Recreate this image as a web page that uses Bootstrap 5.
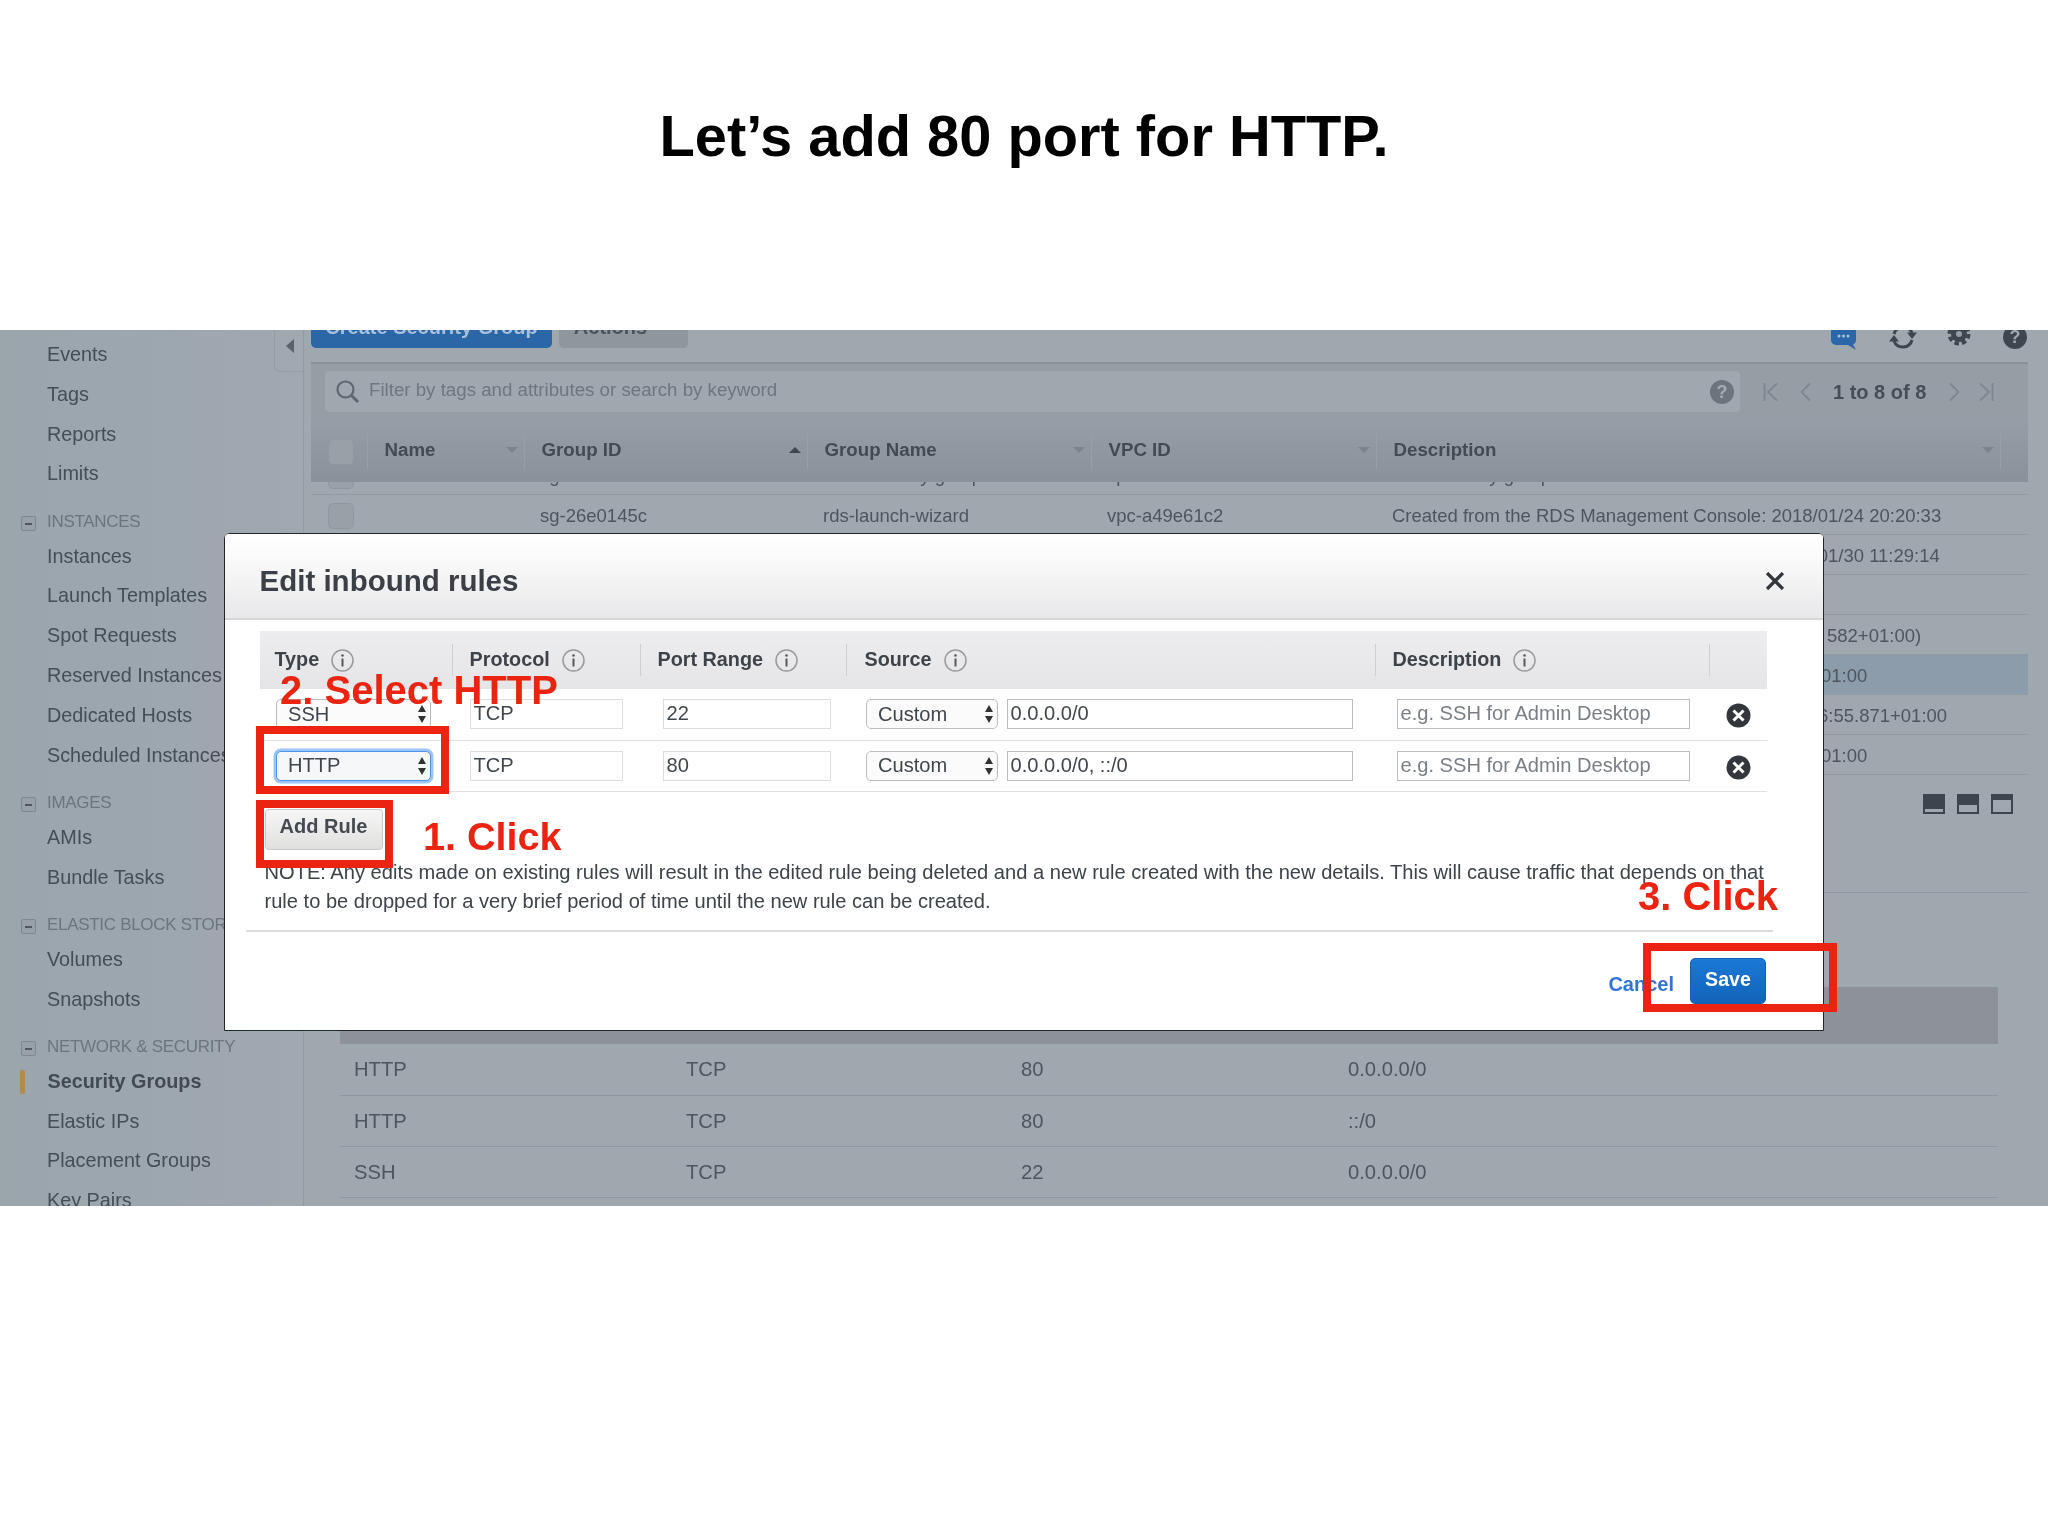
<!doctype html>
<html lang="en">
<head>
<meta charset="utf-8">
<title>Let's add 80 port for HTTP</title>
<link href="https://cdn.jsdelivr.net/npm/bootstrap@5.3.0/dist/css/bootstrap.min.css" rel="stylesheet">
<style>
html,body{background:#fff;margin:0;font-family:"Liberation Sans",Arial,sans-serif}
.slide-head{height:330px;padding-top:98px;margin:0;font-size:57.8px;font-weight:700;line-height:76px;color:#000;text-align:center;letter-spacing:0}
.console{height:876px;overflow:hidden;background:#9fa7af;color:#454d57;font-size:19.8px;filter:blur(.6px)}
.side-nav{width:304px;flex:none;padding-top:5px;border-right:1px solid #929aa2;background:linear-gradient(90deg,#9aa5ac,#a0a8b0)}
.nav-item-x{height:39.8px;line-height:39.8px;padding-left:47px;white-space:nowrap}
.nav-group{height:42.4px;padding-top:14px;display:flex;align-items:flex-start;padding-left:21px;gap:11px;font-size:17px;letter-spacing:-.3px;color:#6c757f;line-height:28px;white-space:nowrap}
.minus-box{width:15px;height:15px;margin-top:8px;border:1px solid #7f8891;border-radius:2px;background:#98a0a8;flex:none;display:flex;align-items:center;justify-content:center}
.minus-box i{display:block;width:7px;height:2px;background:#505862}
.nav-active{font-weight:700;padding-left:47.5px;position:relative;color:#434a54}
.nav-active::before{content:"";position:absolute;left:20px;top:8px;width:5px;height:24px;background:#b5894d;border-radius:2px}
.collapse-tab{left:274px;top:0;width:31px;height:42px;border:1px solid #949ca4;border-top:0;border-right:0;border-bottom-left-radius:6px}
.collapse-tab i{position:absolute;left:11px;top:9px;border-style:solid;border-width:7px 8px 7px 0;border-color:transparent #59616b transparent transparent}
.work{padding:0 20px 0 7px;min-width:0}
.top-strip{height:32px;align-items:flex-end;padding-bottom:14.5px;gap:7px;position:relative}
.create-btn,.act-btn{height:42px;flex:none;border:0;border-radius:0 0 5px 5px;font-size:20px;font-weight:700;line-height:42px;padding:0}
.create-btn{width:241px;background:#2b66a6;color:#a5bfdc}
.act-btn{width:129px;background:#8f969e;color:#4b525c;padding-right:26px}
.tool-ico{position:absolute}
.ico-chat{left:1519px;bottom:10px}.ico-sync{left:1577px;bottom:11px}.ico-gear{left:1636px;bottom:16px}.ico-help{left:1692px;bottom:13px}
.help-dot{width:24px;height:24px;border-radius:50%;background:#3f4650;color:#a0a8b0;font-size:18px;font-weight:700;line-height:24px;text-align:center;display:block}
.search-strip{height:59px;border-top:2px solid #8b929a;background:#959da5;padding:6px 0 8px 14px;align-items:center}
.search-box{width:1415px;height:41px;background:#9fa7af;border-radius:4px;padding:0 6px 0 10px;align-items:center;gap:9px;font-size:18.7px;color:#6e7680}
.search-txt{padding-bottom:2px}
.search-help{width:24px;height:24px;border-radius:50%;background:#6d747e;color:#a5acb4;font-weight:700;font-size:18px;line-height:24px;text-align:center;margin-left:auto}
.pager{padding-left:23px;align-items:center;font-weight:700;font-size:20px;color:#454d57;white-space:nowrap}
.pg-txt{margin:0 23px 0 22px}
.pg-a{margin-right:21px}.pg-b{margin-left:18px}
.grid-cols{display:grid;grid-template-columns:57px 157px 283px 284px 285px 624px 1fr}
.grid-head{height:61px;background:linear-gradient(#969da6,#8b919a);font-weight:700;font-size:18.7px;color:#434a54;position:relative;z-index:1}
.grid-head>div{display:flex;align-items:center;padding:0 4px 3px 16.5px;justify-content:space-between;position:relative}
.grid-head>div::after{content:"";position:absolute;right:0;top:13px;bottom:13px;width:1px;background:#989fa8}
.grid-head>div:last-child::after{display:none}
.caret-d,.caret-u{width:0;height:0;border-left:6px solid transparent;border-right:6px solid transparent;margin-right:3px}
.caret-d{border-top:6px solid #7c838d}
.caret-u{border-bottom:6px solid #3f4650}
.fake-check{width:26px;height:26px;border:1px solid #8f97a0;border-radius:5px;background:#98a0a8;margin-left:17px}
.grid-rows{overflow:hidden}
.grid-line{height:40px;align-items:center;border-bottom:1px solid #929aa2;font-size:18.5px;color:#4d555f;white-space:nowrap;padding-top:2px}
.grid-line>div{padding-left:15px;min-width:0}
.grid-line>div:first-child{padding-left:0}
.line-clip{margin-top:-27px}
.line-sel{background:#8c9cab}
.pad-a{padding-left:444px!important}
.pad-b{padding-left:450px!important}.pad-c{padding-left:441px!important}
.layout-zone{height:118px;border-bottom:1px solid #8f97a0;padding:19px 15px 0 0;justify-content:flex-end;gap:12px}
.pane-ico{width:22px;height:20px;background:#3d444e;display:flex;flex-direction:column;justify-content:flex-end}
.pane-ico i{display:block;background:#9fa7af;margin:0 2px 2px}
.pi-1 i{height:3px}.pi-2 i{height:7px}.pi-3 i{height:12px}
.pane-wrap{padding:94px 30px 0 29px}
.table.perm-table{--bs-table-bg:transparent;--bs-table-color:#4d555f;--bs-table-border-color:#8f97a0;table-layout:fixed;margin:0;font-size:20.2px;color:#4d555f}
.perm-table th{height:57px;background:#8c9298;font-weight:700;border:0;padding:0 0 0 14px;vertical-align:middle}
.perm-table td{height:51.3px;padding:0 0 0 14px;vertical-align:middle;border-color:#8f97a0}
.col-a{width:332px}.col-b{width:335px}.col-c{width:327px}
.rule-dialog{left:224px;top:203px;width:1600px;height:497.500px;background:#fff;border:1.500px solid #22252a;border-radius:6px 6px 0 0;color:#333a42;font-size:20.1px}
.modal-header.rule-head{height:86px;flex:none;padding:10px 38px 0 34.500px;background:linear-gradient(#fff,#fbfbfb 25%,#e8e8ea);border-bottom:2px solid #d5d5d8;border-radius:4px 4px 0 0}
.rule-title{font-size:29.5px;font-weight:700;color:#3b3f46;margin:0;line-height:1}
.modal-header .btn-close.x-close{font-size:20px;padding:0;margin:0;width:20px;height:20px;opacity:1;background:url("data:image/svg+xml,%3Csvg xmlns='http://www.w3.org/2000/svg' viewBox='0 0 20 20'%3E%3Cpath d='M2 2l16 16M18 2L2 18' stroke='%2333373c' stroke-width='3.200' fill='none'/%3E%3C/svg%3E") center/20px no-repeat}
.rule-body{padding:11px 56px 0 34.500px;flex:none}
.rule-cols{display:grid;grid-template-columns:193px 188px 206px 529px 334px 56px}
.rule-headrow{height:58px;background:linear-gradient(#ededef,#e5e5e8);font-weight:700;font-size:19.8px;color:#3e434a}
.rule-headrow>div{display:flex;align-items:center;gap:12px;padding-left:17px;position:relative}
.rule-headrow>div:first-child{padding-left:15px}
.rule-headrow>div:nth-child(4){padding-left:18px}
.rule-headrow>div:not(:last-child)::after{content:"";position:absolute;right:0;top:13px;bottom:13px;width:1px;background:#cfcfd2}
.rule-row{height:51.7px;align-items:center;border-bottom:1px solid #e1e1e3;padding-bottom:1px}
.rule-row>div{display:flex;align-items:center;min-width:0}
.rm-ico{margin:3px 0 0 1px}
select.form-select.pick,input.form-control.field{height:30px;min-height:0;font-size:20.1px;line-height:1;color:#40464e}
select.form-select.pick{padding:0 0 0 11.5px;border:1px solid #bcbcbf;border-radius:5px;background-color:#fbfbfb;background-image:url("data:image/svg+xml,%3Csvg xmlns='http://www.w3.org/2000/svg' width='10' height='20'%3E%3Cpath d='M5 1 9 8H1zM5 19 1 12h8z' fill='%23333'/%3E%3C/svg%3E");background-size:10px 20px;background-position:right 3px center;background-repeat:no-repeat;box-shadow:none}
input.form-control.field{padding:0 3px;border:1px solid #dcdcde;border-radius:0;box-shadow:none;background:#fff}
input.field::placeholder{color:#7a7f86;opacity:1}
.wide-src{border-color:#bdbdc0!important}
.w-type{margin-left:16px;width:155px!important}
.w-proto{margin-left:17px;width:153px!important}
.w-port{margin-left:22px;width:168px!important}
.w-cust{margin-left:19px;width:132px!important}
.w-src{margin-left:9px;width:346px!important}
.w-desc{margin-left:21px;width:293px!important}
select.form-select.pick.picked{border-color:#4d94ea;box-shadow:0 0 0 2.500px #9cc6f5;background-color:#f6f7f9}
.add-btn{display:block;margin:17px 0 7.6px 5px;width:118px;height:41px;padding:0 0 7px;font-size:20px;font-weight:700;color:#454a51;background:linear-gradient(#f6f6f6,#e0e0df);border:1px solid #c8c8c8;border-radius:4px}
.note-text{margin:0 0 0 5px;line-height:29.5px;font-size:20.1px;white-space:nowrap;color:#3d434b}
.rule-rule{margin:13px 50px 0 21px;height:2px;border:0;background:#dcdcde;opacity:1;flex:none}
.rule-foot{padding:26px 57px 0 0;justify-content:flex-end;align-items:flex-start;gap:16px;flex:none}
.cancel-lnk{color:#2f76d6;font-weight:700;font-size:20px;text-decoration:none;margin-top:15px;line-height:22px}
.btn.save-btn{width:76px;height:46px;padding:0 0 3px;border:1px solid #1262b5;background:linear-gradient(#1b78d6,#1264b9);color:#fff;font-weight:700;font-size:19.6px;border-radius:5px}
.red-frame{border:8px solid #ea2410;pointer-events:none}
.rf-1{left:256px;top:396px;width:193px;height:68px}
.rf-2{left:256px;top:470px;width:137px;height:68px}
.rf-3{left:1643px;top:613px;width:194px;height:69px}
.red-note{color:#ea2410;font-size:40px;font-weight:700;line-height:46px;white-space:nowrap}
.rn-1{left:423px;top:483px;font-size:39.6px}
.rn-2{left:280px;top:337px}
.rn-3{left:1638px;top:543px}
</style>
</head>
<body>
<h1 class="slide-head">Let’s add 80 port for HTTP.</h1>

<div class="console d-flex position-relative">
  <aside class="side-nav position-relative">
    <div class="collapse-tab position-absolute"><i></i></div>
    <div class="nav-item-x">Events</div>
    <div class="nav-item-x">Tags</div>
    <div class="nav-item-x">Reports</div>
    <div class="nav-item-x">Limits</div>
    <div class="nav-group"><span class="minus-box"><i></i></span>INSTANCES</div>
    <div class="nav-item-x">Instances</div>
    <div class="nav-item-x">Launch Templates</div>
    <div class="nav-item-x">Spot Requests</div>
    <div class="nav-item-x">Reserved Instances</div>
    <div class="nav-item-x">Dedicated Hosts</div>
    <div class="nav-item-x">Scheduled Instances</div>
    <div class="nav-group"><span class="minus-box"><i></i></span>IMAGES</div>
    <div class="nav-item-x">AMIs</div>
    <div class="nav-item-x">Bundle Tasks</div>
    <div class="nav-group"><span class="minus-box"><i></i></span>ELASTIC BLOCK STORE</div>
    <div class="nav-item-x">Volumes</div>
    <div class="nav-item-x">Snapshots</div>
    <div class="nav-group"><span class="minus-box"><i></i></span>NETWORK &amp; SECURITY</div>
    <div class="nav-item-x nav-active">Security Groups</div>
    <div class="nav-item-x">Elastic IPs</div>
    <div class="nav-item-x">Placement Groups</div>
    <div class="nav-item-x">Key Pairs</div>
  </aside>

  <main class="work flex-grow-1">
    <div class="top-strip d-flex">
      <button class="create-btn">Create Security Group</button>
      <button class="act-btn">Actions</button>
      <svg class="tool-ico ico-chat" width="27" height="27" viewBox="0 0 27 27"><path d="M6 1h15a5 5 0 0 1 5 5v9a5 5 0 0 1-3 4.500L26 25l-8-5H6a5 5 0 0 1-5-5V6a5 5 0 0 1 5-5z" fill="#2b66a8"/><circle cx="9" cy="11" r="1.500" fill="#a8c4e2"/><circle cx="13.500" cy="11" r="1.500" fill="#a8c4e2"/><circle cx="18" cy="11" r="1.500" fill="#a8c4e2"/></svg>
      <svg class="tool-ico ico-sync" width="30" height="28" viewBox="0 0 30 28" fill="none"><path d="M6 11a9.500 9.500 0 0 1 18-1" stroke="#3f4650" stroke-width="3"/><path d="M24 17a9.500 9.500 0 0 1-18 1" stroke="#3f4650" stroke-width="3"/><path d="M19 9.500h10l-5 6.500zM1 18.500h10l-5-6.500z" fill="#3f4650"/></svg>
      <svg class="tool-ico ico-gear" width="24" height="24" viewBox="0 0 24 24"><circle cx="12" cy="12" r="8" fill="#3f4650"/><circle cx="12" cy="12" r="9.500" fill="none" stroke="#3f4650" stroke-width="4" stroke-dasharray="4.500 2.960"/><circle cx="12" cy="12" r="3" fill="#949ca4"/></svg>
      <span class="tool-ico ico-help help-dot">?</span>
    </div>

    <div class="search-strip d-flex">
      <div class="search-box d-flex">
        <svg width="25" height="25" viewBox="0 0 25 25" fill="none" stroke="#5f6771" stroke-width="2.200"><circle cx="10.500" cy="10.500" r="8"/><path d="M16 16l7 7" stroke-width="3"/></svg>
        <span class="search-txt">Filter by tags and attributes or search by keyword</span>
        <span class="search-help">?</span>
      </div>
      <div class="pager d-flex">
        <svg width="16" height="20" viewBox="0 0 16 20" fill="none" stroke="#7e8690" stroke-width="1.800" class="pg-a"><path d="M1.500 1v18M14 1.500 5 10l9 8.500"/></svg>
        <svg width="11" height="20" viewBox="0 0 11 20" fill="none" stroke="#7e8690" stroke-width="1.800"><path d="M10 1.500 1.500 10l8.500 8.500"/></svg>
        <span class="pg-txt">1 to 8 of 8</span>
        <svg width="11" height="20" viewBox="0 0 11 20" fill="none" stroke="#7e8690" stroke-width="1.800"><path d="M1 1.500 9.500 10 1 18.500"/></svg>
        <svg width="16" height="20" viewBox="0 0 16 20" fill="none" stroke="#7e8690" stroke-width="1.800" class="pg-b"><path d="M14.500 1v18M2 1.500 11 10l-9 8.500"/></svg>
      </div>
    </div>

    <div class="grid-cols grid-head">
      <div class="p-0"><span class="fake-check"></span></div>
      <div>Name<span class="caret-d"></span></div>
      <div>Group ID<span class="caret-u"></span></div>
      <div>Group Name<span class="caret-d"></span></div>
      <div>VPC ID<span class="caret-d"></span></div>
      <div>Description<span class="caret-d"></span></div>
      <div></div>
    </div>
    <div class="grid-rows">
      <div class="grid-cols grid-line line-clip"><div><span class="fake-check d-block"></span></div><div></div><div>sg-0a1f2b3c</div><div>Web security group</div><div>vpc-a49e61c2</div><div>Web security group</div></div>
      <div class="grid-cols grid-line"><div><span class="fake-check d-block"></span></div><div></div><div>sg-26e0145c</div><div>rds-launch-wizard</div><div>vpc-a49e61c2</div><div>Created from the RDS Management Console: 2018/01/24 20:20:33</div></div>
      <div class="grid-cols grid-line"><div></div><div></div><div></div><div></div><div></div><div>Created from the RDS Management Console: 2018/01/30 11:29:14</div></div>
      <div class="grid-cols grid-line"><div></div><div></div><div></div><div></div><div></div><div></div></div>
      <div class="grid-cols grid-line"><div></div><div></div><div></div><div></div><div></div><div class="pad-b">582+01:00)</div></div>
      <div class="grid-cols grid-line line-sel"><div></div><div></div><div></div><div></div><div></div><div class="pad-a">01:00</div></div>
      <div class="grid-cols grid-line"><div></div><div></div><div></div><div></div><div></div><div class="pad-c">6:55.871+01:00</div></div>
      <div class="grid-cols grid-line"><div></div><div></div><div></div><div></div><div></div><div class="pad-a">01:00</div></div>
    </div>

    <div class="layout-zone d-flex">
      <span class="pane-ico pi-1"><i></i></span>
      <span class="pane-ico pi-2"><i></i></span>
      <span class="pane-ico pi-3"><i></i></span>
    </div>

    <div class="pane-wrap">
      <table class="table perm-table">
        <colgroup><col class="col-a"><col class="col-b"><col class="col-c"><col></colgroup>
        <thead><tr><th>Type</th><th>Protocol</th><th>Port Range</th><th>Source</th></tr></thead>
        <tbody>
          <tr><td>HTTP</td><td>TCP</td><td>80</td><td>0.0.0.0/0</td></tr>
          <tr><td>HTTP</td><td>TCP</td><td>80</td><td>::/0</td></tr>
          <tr><td>SSH</td><td>TCP</td><td>22</td><td>0.0.0.0/0</td></tr>
        </tbody>
      </table>
    </div>
  </main>

  <section class="rule-dialog modal-content position-absolute">
    <div class="modal-header rule-head">
      <h2 class="rule-title">Edit inbound rules</h2>
      <button type="button" class="btn-close x-close" aria-label="Close"></button>
    </div>
    <div class="rule-body">
      <div class="rule-cols rule-headrow">
        <div>Type <svg width="23" height="23" viewBox="0 0 23 23"><circle cx="11.500" cy="11.500" r="10.500" fill="none" stroke="#9a9a9e" stroke-width="1.500"/><circle cx="11.500" cy="6.500" r="1.300" fill="#55595f"/><path d="M11.500 9.500v8" stroke="#55595f" stroke-width="2"/></svg></div>
        <div>Protocol <svg width="23" height="23" viewBox="0 0 23 23"><circle cx="11.500" cy="11.500" r="10.500" fill="none" stroke="#9a9a9e" stroke-width="1.500"/><circle cx="11.500" cy="6.500" r="1.300" fill="#55595f"/><path d="M11.500 9.500v8" stroke="#55595f" stroke-width="2"/></svg></div>
        <div>Port Range <svg width="23" height="23" viewBox="0 0 23 23"><circle cx="11.500" cy="11.500" r="10.500" fill="none" stroke="#9a9a9e" stroke-width="1.500"/><circle cx="11.500" cy="6.500" r="1.300" fill="#55595f"/><path d="M11.500 9.500v8" stroke="#55595f" stroke-width="2"/></svg></div>
        <div>Source <svg width="23" height="23" viewBox="0 0 23 23"><circle cx="11.500" cy="11.500" r="10.500" fill="none" stroke="#9a9a9e" stroke-width="1.500"/><circle cx="11.500" cy="6.500" r="1.300" fill="#55595f"/><path d="M11.500 9.500v8" stroke="#55595f" stroke-width="2"/></svg></div>
        <div>Description <svg width="23" height="23" viewBox="0 0 23 23"><circle cx="11.500" cy="11.500" r="10.500" fill="none" stroke="#9a9a9e" stroke-width="1.500"/><circle cx="11.500" cy="6.500" r="1.300" fill="#55595f"/><path d="M11.500 9.500v8" stroke="#55595f" stroke-width="2"/></svg></div>
        <div></div>
      </div>
      <div class="rule-cols rule-row">
        <div><select class="form-select pick w-type"><option>SSH</option><option>HTTP</option></select></div>
        <div><input class="form-control field w-proto" value="TCP"></div>
        <div><input class="form-control field w-port" value="22"></div>
        <div><select class="form-select pick w-cust"><option>Custom</option></select><input class="form-control field wide-src w-src" value="0.0.0.0/0"></div>
        <div><input class="form-control field wide-src w-desc" placeholder="e.g. SSH for Admin Desktop"></div>
        <div class="justify-content-center"><svg class="rm-ico" width="25" height="25" viewBox="0 0 25 25"><circle cx="12.500" cy="12.500" r="12" fill="#33373d"/><path d="M7.500 7.500l10 10M17.500 7.500l-10 10" stroke="#fff" stroke-width="3"/></svg></div>
      </div>
      <div class="rule-cols rule-row">
        <div><select class="form-select pick picked w-type"><option>HTTP</option><option>SSH</option></select></div>
        <div><input class="form-control field w-proto" value="TCP"></div>
        <div><input class="form-control field w-port" value="80"></div>
        <div><select class="form-select pick w-cust"><option>Custom</option></select><input class="form-control field wide-src w-src" value="0.0.0.0/0, ::/0"></div>
        <div><input class="form-control field wide-src w-desc" placeholder="e.g. SSH for Admin Desktop"></div>
        <div class="justify-content-center"><svg class="rm-ico" width="25" height="25" viewBox="0 0 25 25"><circle cx="12.500" cy="12.500" r="12" fill="#33373d"/><path d="M7.500 7.500l10 10M17.500 7.500l-10 10" stroke="#fff" stroke-width="3"/></svg></div>
      </div>
      <button class="add-btn">Add Rule</button>
      <p class="note-text">NOTE: Any edits made on existing rules will result in the edited rule being deleted and a new rule created with the new details. This will cause traffic that depends on that<br>rule to be dropped for a very brief period of time until the new rule can be created.</p>
    </div>
    <hr class="rule-rule">
    <div class="rule-foot d-flex">
      <a class="cancel-lnk" href="#">Cancel</a>
      <button class="btn save-btn">Save</button>
    </div>
  </section>

  <div class="red-frame rf-1 position-absolute"></div>
  <div class="red-frame rf-2 position-absolute"></div>
  <div class="red-frame rf-3 position-absolute"></div>
  <div class="red-note rn-2 position-absolute">2. Select HTTP</div>
  <div class="red-note rn-1 position-absolute">1. Click</div>
  <div class="red-note rn-3 position-absolute">3. Click</div>
</div>
<script src="https://cdn.jsdelivr.net/npm/bootstrap@5.3.0/dist/js/bootstrap.bundle.min.js"></script>
</body>
</html>
